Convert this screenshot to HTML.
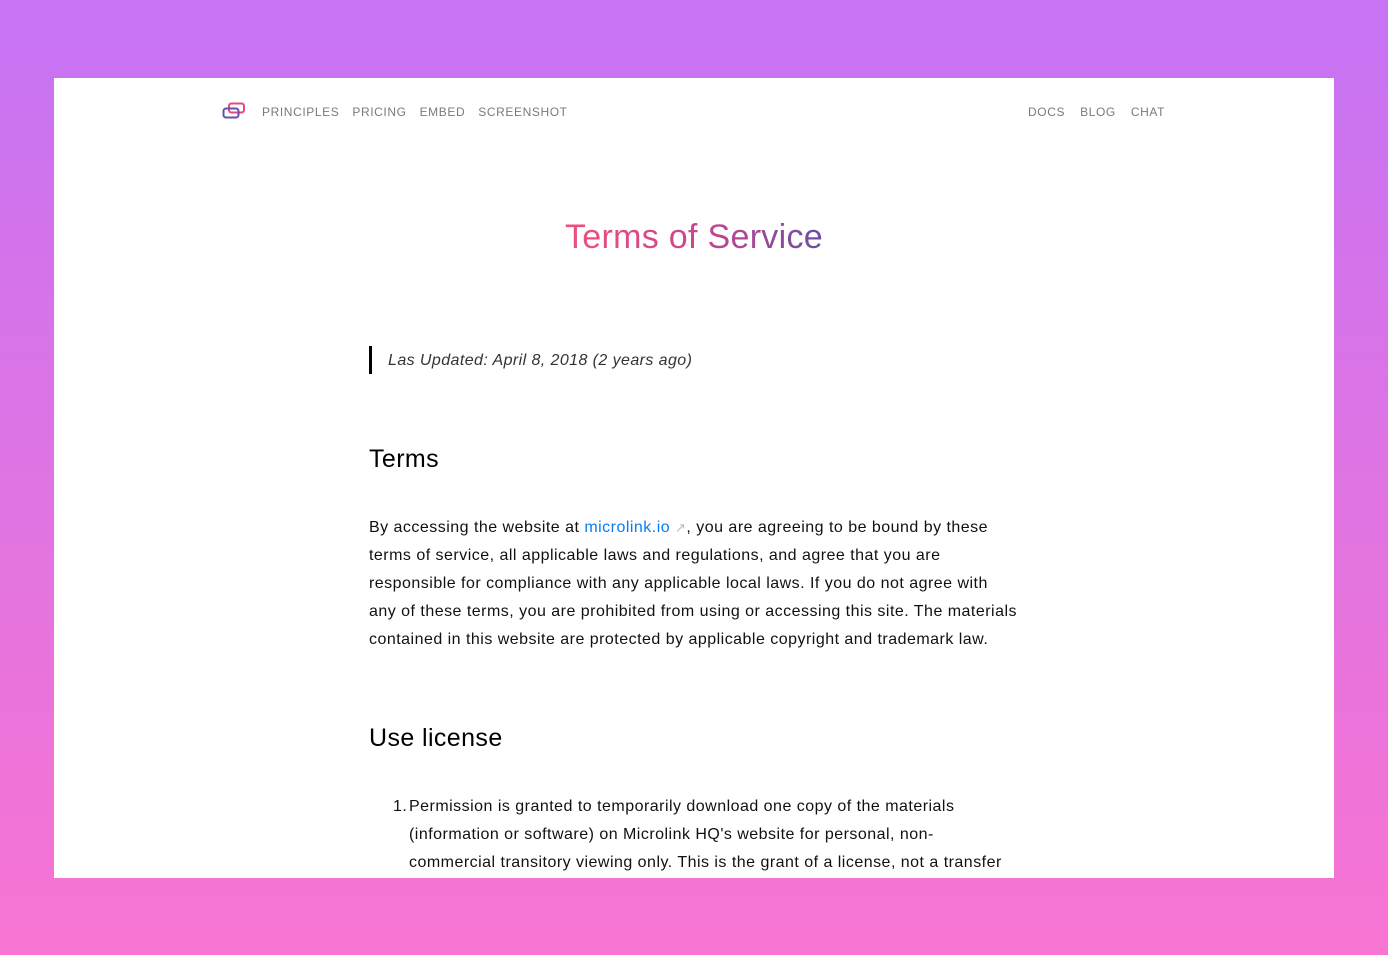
<!DOCTYPE html>
<html><head><meta charset="utf-8"><style>
*{margin:0;padding:0;box-sizing:border-box}
html,body{width:1388px;height:955px;overflow:hidden}
body{background:linear-gradient(180deg,#c673f4 0%,#f874d2 100%);font-family:"Liberation Sans",sans-serif;position:relative}
.card{position:absolute;left:54px;top:78px;width:1280px;height:800px;background:#fff;overflow:hidden}
.nav{position:absolute;top:27px;font-size:12px;letter-spacing:0.6px;color:#7a7a7a}
.nav span{margin-right:13px}
.nav.r span{margin-right:15px}
h1{position:absolute;top:140px;left:0;width:1280px;text-align:center;font-weight:normal;font-size:34px;letter-spacing:0.3px}
h1 span{background:linear-gradient(90deg,#f0507d,#c5458f 55%,#6b4fa3);-webkit-background-clip:text;background-clip:text;color:transparent}
.q{position:absolute;left:315px;top:268px;border-left:3px solid #000;padding-left:16px;height:28px;line-height:30px;font-style:italic;font-size:16px;letter-spacing:0.42px;color:#333}
h2{position:absolute;left:315px;font-weight:normal;font-size:25px;letter-spacing:0.4px;color:#000}
.p{position:absolute;left:315px;font-size:16px;line-height:28px;color:#111;white-space:nowrap;letter-spacing:0.48px}
a{color:#067df7;text-decoration:none}
</style></head><body>
<div class="card">
<svg style="position:absolute;left:168px;top:24px" width="24" height="18" viewBox="0 0 24 18"><rect x="7" y="1.5" width="15" height="9" rx="2.5" fill="none" stroke="#e8467c" stroke-width="2"/><rect x="1.5" y="6.5" width="15" height="9" rx="2.5" fill="none" stroke="#6a4fa8" stroke-width="2"/></svg>
<div class="nav" style="left:208px"><span>PRINCIPLES</span><span>PRICING</span><span>EMBED</span><span>SCREENSHOT</span></div>
<div class="nav r" style="left:974px"><span>DOCS</span><span>BLOG</span><span style="margin:0">CHAT</span></div>
<h1><span>Terms of Service</span></h1>
<div class="q">Las Updated: April 8, 2018 (2 years ago)</div>
<h2 style="top:367px">Terms</h2>
<div class="p" style="top:436px">By accessing the website at <a>microlink.io</a> <span style="color:#bbb;font-size:13px">↗</span>, you are agreeing to be bound by these<br>terms of service, all applicable laws and regulations, and agree that you are<br>responsible for compliance with any applicable local laws. If you do not agree with<br>any of these terms, you are prohibited from using or accessing this site. The materials<br>contained in this website are protected by applicable copyright and trademark law.</div>
<h2 style="top:646px">Use license</h2>
<div class="p" style="top:715px;left:339px">1.</div>
<div class="p" style="top:715px;left:355px">Permission is granted to temporarily download one copy of the materials<br>(information or software) on Microlink HQ's website for personal, non-<br>commercial transitory viewing only. This is the grant of a license, not a transfer</div>
</div>
</body></html>
